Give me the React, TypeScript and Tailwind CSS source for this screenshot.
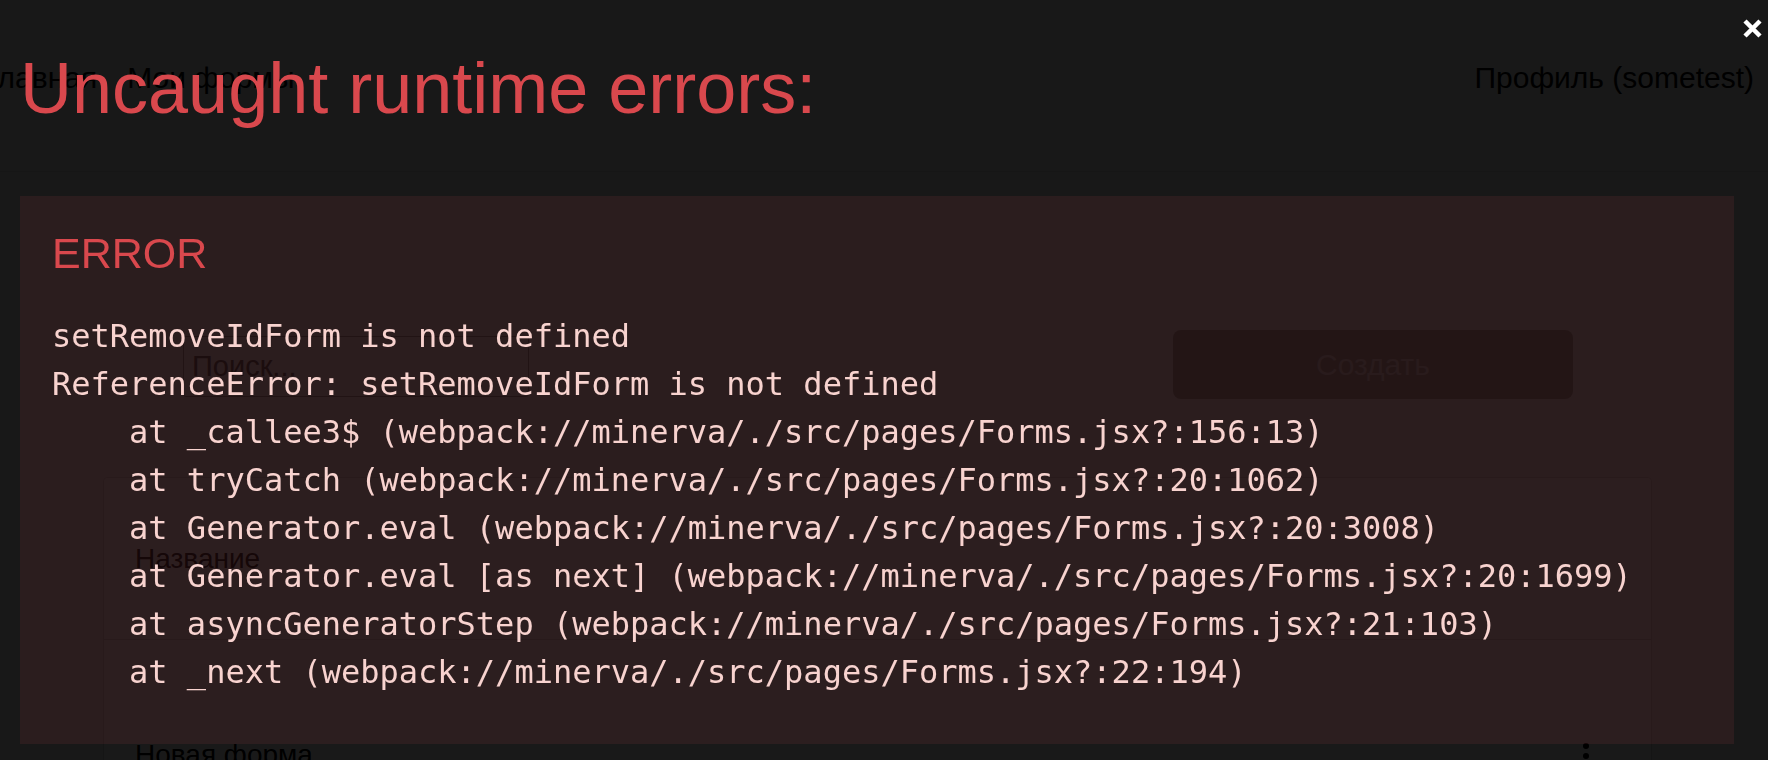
const stack = [
  "setRemoveIdForm is not defined",
  "ReferenceError: setRemoveIdForm is not defined",
  "    at _callee3$ (webpack://minerva/./src/pages/Forms.jsx?:156:13)",
  "    at tryCatch (webpack://minerva/./src/pages/Forms.jsx?:20:1062)",
  "    at Generator.eval (webpack://minerva/./src/pages/Forms.jsx?:20:3008)",
  "    at Generator.eval [as next] (webpack://minerva/./src/pages/Forms.jsx?:20:1699)",
  "    at asyncGeneratorStep (webpack://minerva/./src/pages/Forms.jsx?:21:103)",
  "    at _next (webpack://minerva/./src/pages/Forms.jsx?:22:194)",
];

const FormsPage = () => {
  return (
    <div className="h-[760px] overflow-hidden bg-[#f0f0f0] font-['Liberation_Sans',Arial,sans-serif] text-black">
      <header className="flex h-[172px] items-start justify-between border-b border-[#e2e2e2] pt-[60px] pr-[14px] text-[30px] leading-[36px]">
        <nav className="-ml-[17px] flex gap-[30px]">
          <a>Главная</a>
          <a>Мои формы</a>
        </nav>
        <a>Профиль (sometest)</a>
      </header>
      <main className="pt-[158px]">
        <div className="flex items-start">
          <input
            className="ml-[183px] mt-[6px] h-[61px] w-[346px] rounded-[3px] border border-[#8a8a8a] pl-[8px] text-[29px] placeholder:text-[#444] focus:outline-none"
            placeholder="Поиск..."
          />
          <button className="ml-[644px] h-[69px] w-[400px] rounded-[8px] bg-[#979b93] text-[30px] text-[#d8d8d8]">Создать</button>
        </div>
        <div className="ml-[103px] mt-[78px] w-[1549px] rounded-[4px] border border-[#d0d0d0] bg-white text-[28px]">
          <div className="flex h-[162px] items-center border-b border-[#d0d0d0] pl-[31px]">Название</div>
          <div className="flex items-start justify-between pl-[31px] pr-[62px] pt-[99px] leading-[32px]">
            <span>Новая форма</span>
            <svg width="6" height="28" viewBox="0 0 6 28" className="mt-[4px]">
              <circle cx="3" cy="3" r="3" fill="#000" />
              <circle cx="3" cy="13" r="3" fill="#000" />
              <circle cx="3" cy="23" r="3" fill="#000" />
            </svg>
          </div>
        </div>
      </main>
    </div>
  );
};

const ErrorOverlay = () => {
  return (
    <div className="fixed inset-0 flex flex-col bg-black/90 pl-[20px] pr-[34px] pt-[45px] text-[#f8d3cf]">
      <h1 className="font-['Liberation_Sans',Arial,sans-serif] text-[72px] leading-[86px] text-[#d9484d]">Uncaught runtime errors:</h1>
      <button className="absolute right-[5px] top-[18px]">
        <svg width="21" height="21" viewBox="0 0 21 21">
          <path d="M3 3 L18 18 M18 3 L3 18" stroke="#fff" strokeWidth="4.5" />
        </svg>
      </button>
      <div className="mt-[65px] bg-[rgba(204,64,74,0.1)] pb-[48px] pl-[32px] pt-[31px]">
        <div className="font-['Liberation_Sans',Arial,sans-serif] text-[43px] leading-[52px] text-[#d9484d]">ERROR</div>
        <div className="mt-[33px] whitespace-pre font-['DejaVu_Sans_Mono',monospace] text-[32px] leading-[48px]">
          {stack.map((line) => (
            <div key={line}>{line}</div>
          ))}
        </div>
      </div>
    </div>
  );
};

const App = () => {
  return (
    <div className="relative">
      <FormsPage />
      <ErrorOverlay />
    </div>
  );
};

export default App;
